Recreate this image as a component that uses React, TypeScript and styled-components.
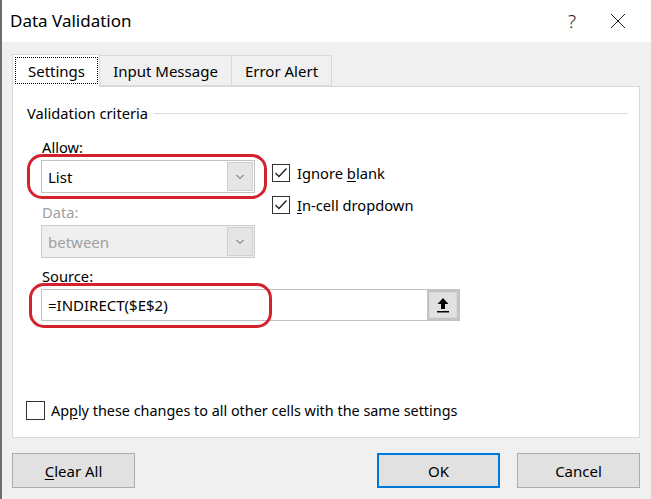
import React from "react";
import styled, { createGlobalStyle } from "styled-components";

const Global = createGlobalStyle`
  html, body {
    margin: 0;
    padding: 0;
    background: #f0f0f0;
  }
  body {
    font-family: "Noto Sans", "Open Sans", sans-serif;
    font-size: 14.7px;
    color: #000;
  }
`;

const Dialog = styled.div`
  width: 651px;
  height: 499px;
  box-sizing: border-box;
  border-left: 2px solid #6e6e6e;
  background: #f0f0f0;
  display: flex;
  flex-direction: column;
`;

const TitleBar = styled.div`
  height: 42px;
  background: #fff;
  display: flex;
  align-items: center;
  padding: 0 10px 0 8px;
`;

const Title = styled.div`
  flex: 1;
  font-size: 17px;
  padding-bottom: 2px;
`;

const TitleButton = styled.div`
  width: 46px;
  height: 42px;
  display: flex;
  align-items: center;
  justify-content: center;
  font-size: 19px;
  font-weight: 300;
  color: #222;
`;

const Body = styled.div`
  flex: 1;
  display: flex;
  flex-direction: column;
  padding: 12px 11px 0 10px;
`;

const Tabs = styled.div`
  display: flex;
  align-items: flex-end;
  height: 33px;
  margin-bottom: -1px;
  position: relative;
  z-index: 1;
`;

const Tab = styled.div<{ $active?: boolean; $w: number }>`
  box-sizing: border-box;
  width: ${(p) => p.$w}px;
  height: ${(p) => (p.$active ? 33 : 31)}px;
  margin-bottom: ${(p) => (p.$active ? 0 : 1)}px;
  background: ${(p) => (p.$active ? "#fff" : "#f0f0f0")};
  border: 1px solid #d9d9d9;
  border-bottom: ${(p) => (p.$active ? "none" : "1px solid #d9d9d9")};
  border-left: ${(p) => (p.$active ? "1px solid #d9d9d9" : "none")};
  display: flex;
  align-items: stretch;
  justify-content: center;
  padding: ${(p) => (p.$active ? "2px 1px 3px 2px" : "0")};
  font-size: 15px;
`;

const TabLabel = styled.span<{ $focus?: boolean }>`
  flex: 1;
  display: flex;
  align-items: center;
  justify-content: center;
  border: 1px dotted ${(p) => (p.$focus ? "#000" : "transparent")};
`;

const Panel = styled.div`
  box-sizing: border-box;
  height: 352px;
  background: #fff;
  border: 1px solid #d9d9d9;
  padding: 16px 11px 0 14px;
  display: flex;
  flex-direction: column;
`;

const GroupHeader = styled.div`
  display: flex;
  align-items: center;
  gap: 6px;
  height: 20px;
`;

const GroupLine = styled.div`
  flex: 1;
  height: 1px;
  background: #dcdcdc;
`;

const GroupBody = styled.div`
  padding-left: 14px;
  padding-top: 14px;
`;

const TopRow = styled.div`
  display: flex;
  gap: 17px;
`;

const Column = styled.div`
  display: flex;
  flex-direction: column;
  width: 214px;
`;

const Label = styled.div<{ $disabled?: boolean; $gap?: number }>`
  height: 20px;
  line-height: 20px;
  padding-left: 1px;
  margin-top: ${(p) => p.$gap ?? 0}px;
  margin-bottom: 3px;
  color: ${(p) => (p.$disabled ? "#a0a0a0" : "#000")};
`;

const Key = styled.span`
  text-decoration: underline;
  text-underline-offset: 2px;
`;

const RingWrap = styled.div`
  position: relative;
`;

const Ring = styled.div<{ $l: number; $t: number; $w: number; $h: number }>`
  position: absolute;
  left: ${(p) => p.$l}px;
  top: ${(p) => p.$t}px;
  width: ${(p) => p.$w}px;
  height: ${(p) => p.$h}px;
  box-sizing: border-box;
  border: 3px solid #d3222e;
  border-radius: 15px;
  pointer-events: none;
`;

const Combo = styled.div<{ $disabled?: boolean }>`
  box-sizing: border-box;
  height: 33px;
  border: 1px solid ${(p) => (p.$disabled ? "#cccccc" : "#c2c2c2")};
  background: ${(p) => (p.$disabled ? "#efefef" : "#fff")};
  color: ${(p) => (p.$disabled ? "#a0a0a0" : "#000")};
  display: flex;
  align-items: center;
  padding: 1px 1px 1px 6px;
  font-size: 15px;
`;

const ComboText = styled.div`
  flex: 1;
`;

const ComboButton = styled.div`
  box-sizing: border-box;
  width: 26px;
  height: 100%;
  background: #e5e5e5;
  border: 1px solid #d0d0d0;
  display: flex;
  align-items: center;
  justify-content: center;
`;

const Checks = styled.div`
  display: flex;
  flex-direction: column;
  gap: 14px;
  margin-top: 27px;
`;

const CheckRow = styled.div`
  display: flex;
  align-items: center;
  gap: 7px;
  height: 18px;
`;

const Box = styled.div<{ $size: number }>`
  box-sizing: border-box;
  width: ${(p) => p.$size}px;
  height: ${(p) => p.$size}px;
  border: 1px solid #333;
  background: #fff;
  display: flex;
  align-items: center;
  justify-content: center;
`;

const SourceInput = styled.div`
  box-sizing: border-box;
  width: 419px;
  height: 32px;
  border: 1px solid #c2c2c2;
  display: flex;
  align-items: center;
  padding-left: 6px;
  font-size: 15px;
`;

const SourceText = styled.div`
  flex: 1;
`;

const PickButton = styled.div`
  box-sizing: border-box;
  width: 32px;
  height: 100%;
  background: #e1e1e1;
  border: 2px solid #c4c4c4;
  box-shadow: inset 0 0 0 1px #dadada;
  display: flex;
  align-items: center;
  justify-content: center;
`;

const Spacer = styled.div`
  flex: 1;
`;

const ApplyRow = styled.div`
  display: flex;
  align-items: center;
  gap: 6px;
  margin: 0 0 17px -1px;
  height: 20px;
  font-size: 14.4px;
`;

const Footer = styled.div`
  display: flex;
  gap: 17px;
  padding-top: 15px;
`;

const Button = styled.div<{ $default?: boolean }>`
  box-sizing: border-box;
  width: 123px;
  height: 35px;
  background: #e1e1e1;
  border: ${(p) => (p.$default ? "2px solid #0078d7" : "1px solid #adadad")};
  display: flex;
  align-items: center;
  justify-content: center;
  font-size: 15px;
`;

const Chevron = () => (
  <svg width="10" height="6" viewBox="0 0 10 6">
    <polyline points="1.5,1 5,4.5 8.5,1" fill="none" stroke="#505050" strokeWidth="1" />
  </svg>
);

const Tick = () => (
  <svg width="14" height="12" viewBox="0 0 14 12">
    <polyline points="1.5,6 5,9.5 12.5,1.5" fill="none" stroke="#222" strokeWidth="1.4" />
  </svg>
);

const CloseIcon = () => (
  <svg width="16" height="16" viewBox="0 0 16 16">
    <path d="M1 1 L15 15 M15 1 L1 15" stroke="#222" strokeWidth="1" />
  </svg>
);

const UpArrow = () => (
  <svg width="14" height="16" viewBox="0 0 14 16">
    <path d="M7 1 L12.5 7 L9 7 L9 12 L5 12 L5 7 L1.5 7 Z" fill="#000" />
    <rect x="1" y="14" width="12" height="1.5" fill="#000" />
  </svg>
);

export default function App() {
  return (
    <>
      <Global />
      <Dialog>
        <TitleBar>
          <Title>Data Validation</Title>
          <TitleButton>?</TitleButton>
          <TitleButton>
            <CloseIcon />
          </TitleButton>
        </TitleBar>
        <Body>
          <Tabs>
            <Tab $active $w={88}>
              <TabLabel $focus>Settings</TabLabel>
            </Tab>
            <Tab $w={132}>
              <TabLabel>Input Message</TabLabel>
            </Tab>
            <Tab $w={100}>
              <TabLabel>Error Alert</TabLabel>
            </Tab>
          </Tabs>
          <Panel>
            <GroupHeader>
              <span>Validation criteria</span>
              <GroupLine />
            </GroupHeader>
            <GroupBody>
              <TopRow>
                <Column>
                  <Label>
                    <Key>A</Key>llow:
                  </Label>
                  <RingWrap>
                    <Ring $l={-14} $t={-6} $w={240} $h={45} />
                    <Combo>
                      <ComboText>List</ComboText>
                      <ComboButton>
                        <Chevron />
                      </ComboButton>
                    </Combo>
                  </RingWrap>
                  <Label $disabled $gap={9}>
                    Data:
                  </Label>
                  <Combo $disabled>
                    <ComboText>between</ComboText>
                    <ComboButton>
                      <Chevron />
                    </ComboButton>
                  </Combo>
                </Column>
                <Checks>
                  <CheckRow>
                    <Box $size={18}>
                      <Tick />
                    </Box>
                    <span>
                      Ignore <Key>b</Key>lank
                    </span>
                  </CheckRow>
                  <CheckRow>
                    <Box $size={18}>
                      <Tick />
                    </Box>
                    <span>
                      <Key>I</Key>n-cell dropdown
                    </span>
                  </CheckRow>
                </Checks>
              </TopRow>
              <Label $gap={8}>
                <Key>S</Key>ource:
              </Label>
              <RingWrap>
                <Ring $l={-12} $t={-6} $w={243} $h={45} />
                <SourceInput>
                  <SourceText>=INDIRECT($E$2)</SourceText>
                  <PickButton>
                    <UpArrow />
                  </PickButton>
                </SourceInput>
              </RingWrap>
            </GroupBody>
            <Spacer />
            <ApplyRow>
              <Box $size={19} />
              <span>
                Ap<Key>p</Key>ly these changes to all other cells with the same settings
              </span>
            </ApplyRow>
          </Panel>
          <Footer>
            <Button>
              <span>
                <Key>C</Key>lear All
              </span>
            </Button>
            <Spacer />
            <Button $default>OK</Button>
            <Button>Cancel</Button>
          </Footer>
        </Body>
      </Dialog>
    </>
  );
}
